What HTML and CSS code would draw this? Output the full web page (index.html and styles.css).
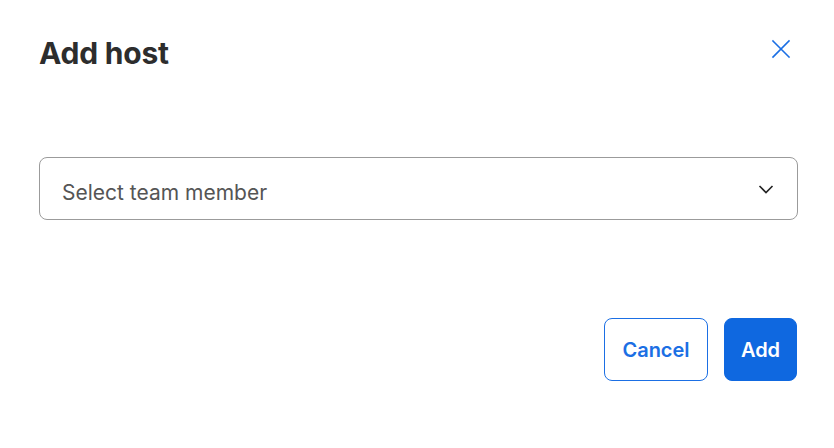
FILE: index.html
```html
<!DOCTYPE html>
<html lang="en">
<head>
<meta charset="utf-8">
<title>Add host</title>
<link rel="stylesheet" href="styles.css">
</head>
<body>
<div class="dialog">
  <header class="dialog-header">
    <h1 class="dialog-title">Add host</h1>
    <button class="close-btn" aria-label="Close">
      <svg width="20" height="20" viewBox="0 0 20 20" fill="none" stroke="#1b6fe4" stroke-width="1.6" stroke-linecap="square">
        <path d="M2 2 L18 18 M18 2 L2 18"/>
      </svg>
    </button>
  </header>
  <div class="dialog-body">
    <div class="select">
      <span class="select-placeholder">Select team member</span>
      <svg class="chevron" width="16" height="10" viewBox="0 0 16 10" fill="none" stroke="#222" stroke-width="1.6">
        <path d="M1.5 2 L8 8.5 L14.5 2"/>
      </svg>
    </div>
  </div>
  <footer class="dialog-footer">
    <button class="btn btn-secondary">Cancel</button>
    <button class="btn btn-primary">Add</button>
  </footer>
</div>
</body>
</html>
```
FILE: styles.css
```css
* { box-sizing: border-box; }
html, body { margin: 0; padding: 0; background: #fff; }
body { font-family: Inter, "Noto Sans", sans-serif; color: #2b2b2b; }

.dialog {
  width: 834px;
  padding: 30px 36px 0 39px;
}

.dialog-header {
  display: flex;
  justify-content: space-between;
  align-items: flex-start;
  height: 127px;
}

.dialog-title {
  margin: 0;
  font-size: 30px;
  font-weight: 700;
  line-height: 46px;
  color: #2d2d2d;
  letter-spacing: -0.2px;
}

.close-btn {
  background: none;
  border: none;
  padding: 0;
  margin: 9px 7px 0 0;
  width: 20px;
  height: 20px;
  cursor: pointer;
}
.close-btn svg { display: block; }

.select {
  height: 63px;
  border: 1px solid #9b9b9b;
  border-radius: 8px;
  display: flex;
  align-items: center;
  justify-content: space-between;
  padding: 7px 23px 0 22px;
}

.select-placeholder {
  font-size: 21px;
  color: #555;
}

.chevron { display: block; margin-top: -7px; }

.dialog-footer {
  display: flex;
  justify-content: flex-end;
  gap: 16px;
  margin-top: 98px;
  padding-right: 1px;
}

.btn {
  height: 63px;
  border-radius: 8px;
  font-family: Inter, "Noto Sans", sans-serif;
  font-size: 20px;
  font-weight: 600;
  cursor: pointer;
}

.btn-secondary {
  width: 104px;
  background: #fff;
  color: #1b6fe4;
  border: 1px solid #1b6fe4;
}

.btn-primary {
  width: 73px;
  background: #0f68e0;
  color: #fff;
  border: 1px solid #0f68e0;
}
```
